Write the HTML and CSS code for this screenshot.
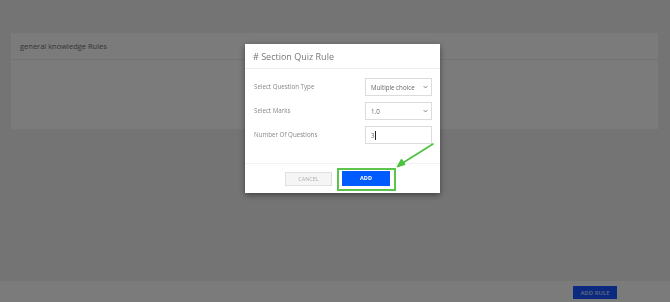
FILE: index.html
```html
<!DOCTYPE html>
<html>
<head>
<meta charset="utf-8">
<link rel="stylesheet" href="styles.css">
</head>
<body>
<div class="page">
  <div class="card">
    <div class="card-head">general knowledge Rules</div>
    <div class="card-body"></div>
  </div>
  <div class="bottom-bar">
    <button class="add-rule">ADD RULE</button>
  </div>
</div>

<div class="overlay">
  <div class="modal">
    <div class="modal-head"># Section Quiz Rule</div>
    <div class="modal-body">
      <div class="row">
        <span class="label">Select Question Type</span>
        <div class="select"><span>Multiple choice</span><svg class="chev" viewBox="0 0 8 5" width="5" height="4"><path d="M1 1 L4 4 L7 1" fill="none" stroke="#666" stroke-width="1.3"/></svg></div>
      </div>
      <div class="row">
        <span class="label">Select Marks</span>
        <div class="select"><span>1.0</span><svg class="chev" viewBox="0 0 8 5" width="5" height="4"><path d="M1 1 L4 4 L7 1" fill="none" stroke="#666" stroke-width="1.3"/></svg></div>
      </div>
      <div class="row">
        <span class="label">Number Of Questions</span>
        <div class="input"><span>3</span><span class="caret"></span></div>
      </div>
    </div>
    <div class="modal-foot">
      <button class="btn-cancel">CANCEL</button>
      <div class="highlight"><button class="btn-add">ADD</button></div>
    </div>
  </div>
  <svg class="arrow" width="670" height="302" viewBox="0 0 670 302">
    <line x1="433" y1="144" x2="401" y2="164" stroke="#4cc23c" stroke-width="1.6" stroke-linecap="round"/>
    <path d="M397 167 L401.5 159 L405 164.5 Z" fill="#4cc23c" stroke="#4cc23c" stroke-width="1" stroke-linejoin="round"/>
  </svg>
</div>
</body>
</html>
```

FILE: styles.css
```css
* { box-sizing: border-box; }
html, body { margin: 0; padding: 0; }
body {
  width: 670px;
  height: 302px;
  overflow: hidden;
  background: #e9e9e9;
  font-family: "Open Sans", "Liberation Sans", sans-serif;
}
.page {
  height: 302px;
  display: flex;
  flex-direction: column;
  padding-top: 33px;
}
.card {
  margin: 0 12px 0 11px;
  height: 96px;
  background: #f7f7f7;
}
.card-head {
  height: 27px;
  border-bottom: 1px solid #e6e6e6;
  padding: 8px 0 0 9px;
  font-size: 7.5px;
  color: #6a6a6a;
}
.bottom-bar {
  margin-top: auto;
  height: 21px;
  background: #f7f7f7;
  display: flex;
  justify-content: flex-end;
  align-items: center;
  padding-right: 53px;
}
.add-rule {
  width: 44px;
  height: 13px;
  border: none;
  padding: 0;
  background: #1452ff;
  color: #c9d6ff;
  font-family: inherit;
  font-size: 6px;
  font-weight: 600;
  margin-top: 2px;
}
.overlay {
  position: fixed;
  inset: 0;
  background: rgba(0, 0, 0, 0.5);
  padding: 44px 0 0 245px;
}
.modal {
  width: 195px;
  height: 149px;
  background: #fff;
  box-shadow: 0 2px 6px rgba(0, 0, 0, 0.45);
  display: flex;
  flex-direction: column;
}
.modal-head {
  height: 25px;
  border-bottom: 1px solid #eeeeee;
  padding: 6px 0 0 8px;
  font-size: 9px;
  color: #777;
}
.modal-body {
  padding: 9px 8px 0 9px;
  height: 95px;
  display: flex;
  flex-direction: column;
  gap: 6px;
  border-bottom: 1px solid #f2f2f2;
}
.row {
  height: 18px;
  display: flex;
  justify-content: space-between;
  align-items: center;
}
.label {
  font-size: 6.2px;
  color: #888;
  margin-top: -2px;
}
.select, .input {
  width: 67px;
  height: 18px;
  border: 1px solid #dcdcdc;
  display: flex;
  align-items: center;
  padding: 0 3px 0 5px;
  font-size: 6.2px;
  color: #666;
}
.select { justify-content: space-between; }
.chev { display: block; }
.caret {
  display: inline-block;
  width: 0.7px;
  height: 9px;
  background: #222;
  margin-left: 0.5px;
}
.modal-foot {
  flex: 1;
  display: flex;
  justify-content: center;
  align-items: center;
  gap: 5px;
  padding: 1px 4px 0 0;
}
.btn-cancel {
  width: 47px;
  height: 14px;
  border: 1px solid #e0e0e0;
  background: #f5f5f5;
  color: #b0b0b0;
  font-family: inherit;
  font-size: 5.5px;
  padding: 0;
}
.highlight {
  width: 59px;
  height: 23px;
  border: 2px solid #5cc44c;
  padding: 1px 4px 0 3px;
}
.btn-add {
  display: block;
  width: 48px;
  height: 15px;
  border: none;
  background: #005cff;
  color: #fff;
  font-family: inherit;
  font-size: 5.5px;
  font-weight: 700;
  padding: 0;
}
.arrow {
  position: absolute;
  left: 0;
  top: 0;
  pointer-events: none;
}
```
